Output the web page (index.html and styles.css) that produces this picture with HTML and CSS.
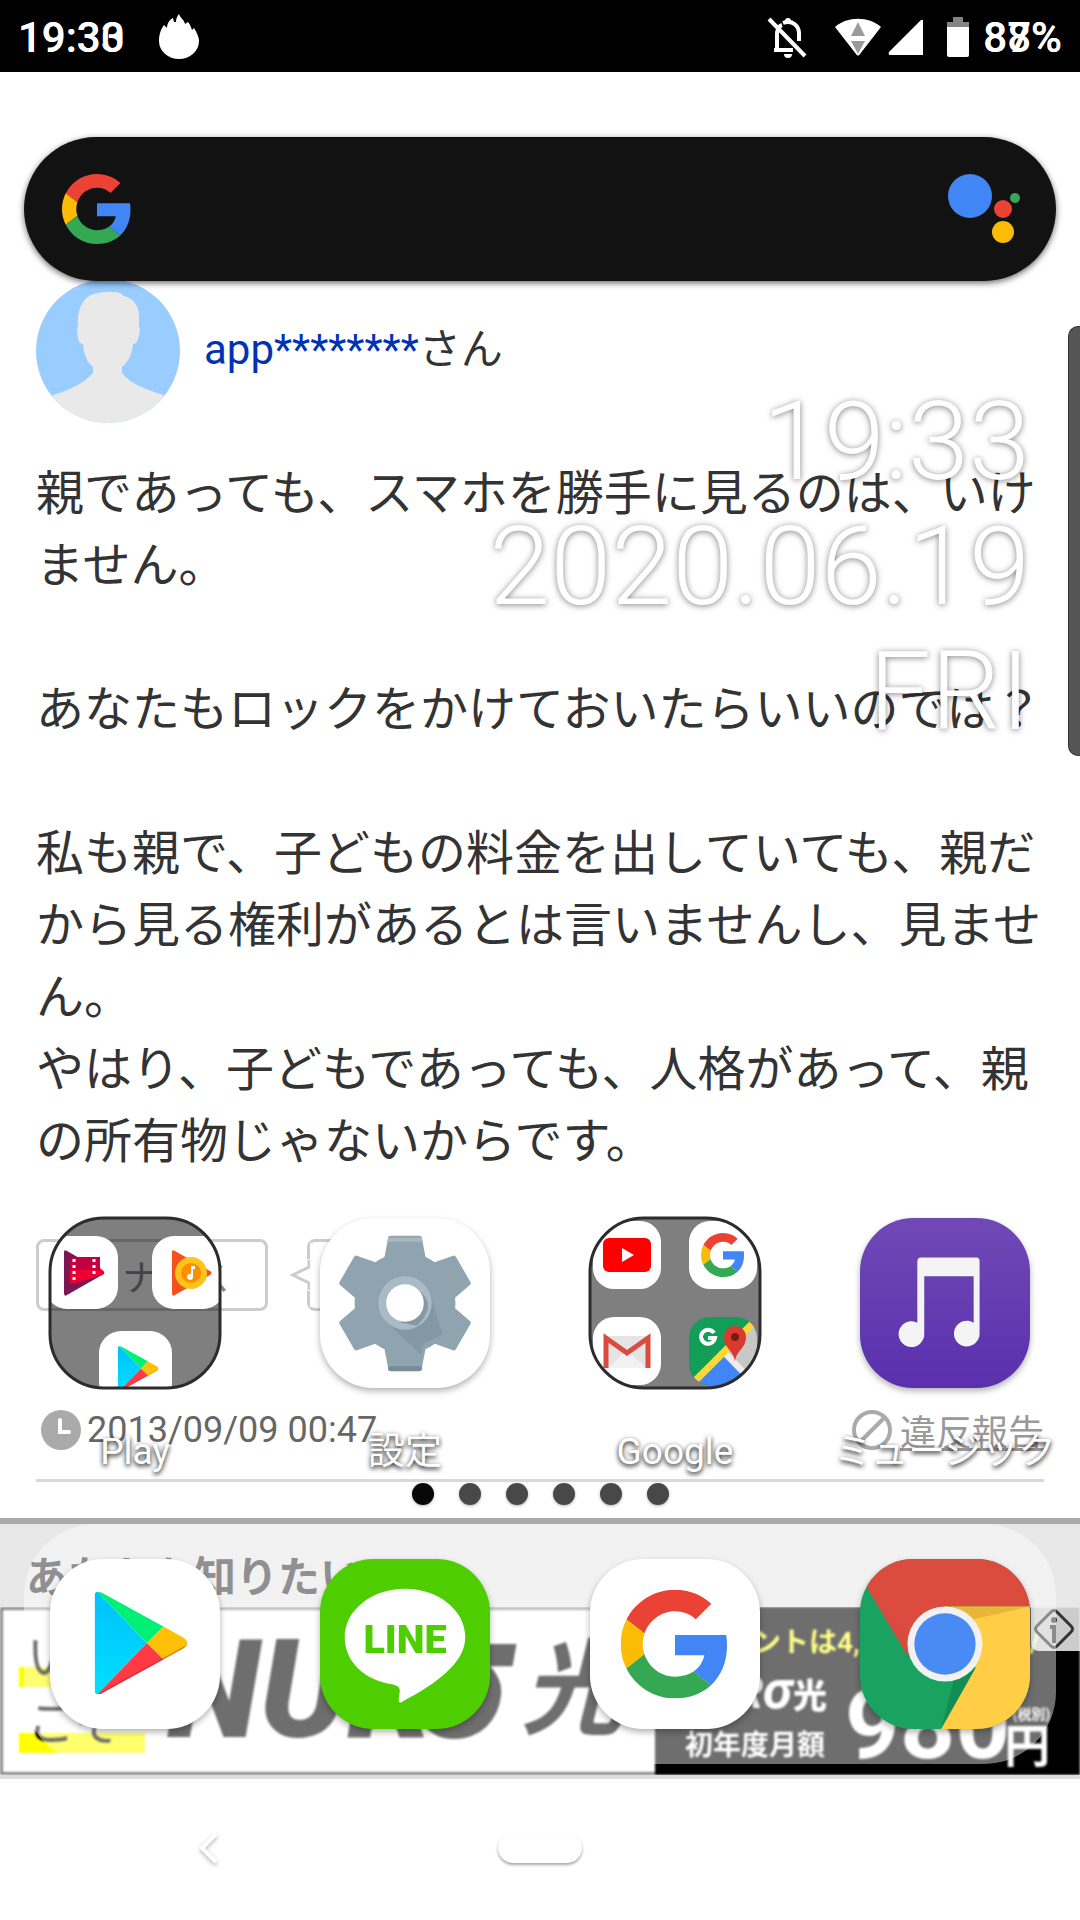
FILE: index.html
```
<!DOCTYPE html>
<html lang="ja">

<head>
    <meta charset="UTF-8">
    <meta name="viewport" content="width=device-width, initial-scale=1.0">
    <title>ホーム</title>
    <link rel="stylesheet" href="styles.css">
</head>

<body>
    <!-- shared logos -->
    <svg class="defs" width="0" height="0" aria-hidden="true">
        <defs>
            <symbol id="google-g" viewBox="0 0 48 48">
                <path fill="#ea4335" d="M24 9.5c3.54 0 6.71 1.22 9.21 3.6l6.85-6.85C35.9 2.38 30.47 0 24 0 14.62 0 6.51 5.38 2.56 13.22l7.98 6.19C12.43 13.72 17.74 9.5 24 9.5z"/>
                <path fill="#4285f4" d="M46.98 24.55c0-1.57-.15-3.09-.38-4.55H24v9.02h12.94c-.58 2.96-2.26 5.48-4.78 7.18l7.73 6c4.51-4.18 7.09-10.36 7.09-17.65z"/>
                <path fill="#fbbc05" d="M10.53 28.59c-.48-1.45-.76-2.99-.76-4.59s.27-3.14.76-4.59l-7.98-6.19C.92 16.46 0 20.12 0 24c0 3.88.92 7.54 2.56 10.78l7.97-6.19z"/>
                <path fill="#34a853" d="M24 48c6.48 0 11.93-2.13 15.89-5.81l-7.73-6c-2.15 1.45-4.92 2.3-8.16 2.3-6.26 0-11.57-4.22-13.47-9.91l-7.98 6.19C6.51 42.62 14.62 48 24 48z"/>
            </symbol>
            <linearGradient id="playBlue" x1="0" y1="0" x2="0" y2="1">
                <stop offset="0" stop-color="#00bfff"/>
                <stop offset="1" stop-color="#00e1ff"/>
            </linearGradient>
            <linearGradient id="musicBg" x1="0" y1="0" x2="0" y2="1">
                <stop offset="0" stop-color="#7049b6"/>
                <stop offset="1" stop-color="#5a30ad"/>
            </linearGradient>
            <linearGradient id="redShade" x1="0" y1="1" x2="1" y2="0">
                <stop offset="0" stop-color="#a8332a"/>
                <stop offset=".6" stop-color="#db4c3f" stop-opacity="0"/>
            </linearGradient>
            <clipPath id="playClip">
                <path d="M45 38Q45 31 52 34L134 79Q144 85 134 91L52 136Q45 139 45 132z"/>
            </clipPath>
            <symbol id="play" viewBox="45 33 95 104">
                <g clip-path="url(#playClip)">
                    <path fill="url(#playBlue)" d="M45 30L98 85 45 140z"/>
                    <path fill="#00f076" d="M45 30L120 63 98 85z"/>
                    <path fill="#ffc107" d="M98 85L116 67 150 85 116 103z"/>
                    <path fill="#ff3a44" d="M45 140L98 85 120 107z"/>
                    <path fill="none" stroke="#8a1030" stroke-opacity=".35" stroke-width="4" d="M50 138L144 86"/>
                </g>
            </symbol>
            <clipPath id="tileClip"><rect width="172" height="172" rx="54"/></clipPath>
            <clipPath id="folderClip"><rect x="2" y="2" width="170" height="170" rx="54"/></clipPath>
        </defs>
    </svg>

    <div class="phone">
        <header class="status">
            <div class="status-time">
                <span>19:30</span>
                <span class="ghost">19:33</span>
            </div>
            <svg class="flame" width="40" height="46" viewBox="0 0 40 46" fill="#fff">
                <path d="M20 0c1 4 5 5 6 10l3-2c2 2 3 5 4 8l2-2c3 5 5 9 5 13a20 18 0 0 1-40 0C0 20 2 15 5 11l3 3c0-4 2-8 6-10l1 4h2c0-3 1-6 3-8z"/>
            </svg>
            <div class="status-icons">
                <svg class="bell" width="40" height="42" viewBox="0 0 40 42" fill="none" stroke="#fff" stroke-width="4">
                    <path d="M7 34H26M10 34V18C10 14 12 10 15 9M16 7C26 3 32 11 32 17V25"/>
                    <path d="M2 3L38 40" stroke-width="4"/>
                    <circle cx="21" cy="5" r="3" fill="#fff" stroke="none"/>
                    <path d="M17 38h8a4 4 0 0 1-8 0z" fill="#fff" stroke="none"/>
                </svg>
                <svg width="46" height="38" viewBox="0 0 46 38">
                    <path fill="#fff" d="M0 9C12-2 34-2 46 9L25 36Q23 39 21 36z"/>
                    <path fill="#9a9a9a" d="M23 4l7 14H16zM16 23h14l-7 13z"/>
                </svg>
                <svg class="signal" width="35" height="36" viewBox="0 0 35 36">
                    <path fill="#fff" d="M33 1Q35 0 35 2V36H2Q0 36 1 33z"/>
                </svg>
                <svg width="22" height="40" viewBox="0 0 22 40">
                    <path fill="#848484" d="M6 0h10v5h6v5H0V5h6z"/>
                    <path fill="#fff" d="M0 10h22v28q0 2-2 2H2q-2 0-2-2z"/>
                </svg>
            </div>
            <div class="status-battery">
                <span>88%</span>
                <span class="ghost">87%</span>
            </div>
        </header>

        <!-- browser page under the launcher -->
        <main class="article">
            <div class="author">
                <svg class="avatar" width="144" height="144" viewBox="0 0 144 144">
                    <clipPath id="face"><circle cx="72" cy="72" r="72"/></clipPath>
                    <g clip-path="url(#face)">
                        <rect width="144" height="144" fill="#99ccff"/>
                        <path fill="#e9e9e9" d="M58 15Q72 11 84 14L88 17C99 20 103 28 103 38V46Q105 52 102 60 101 65 97 65C96 76 92 83 86 88V94C96 106 110 110 127 116L144 144H0L17 116C36 110 48 104 57 94V88C51 83 48 76 47 65 41 65 42 56 41 50L42 46C41 30 47 18 58 15z"/>
                    </g>
                </svg>
                <p class="author-name"><a href="#">app********</a>さん</p>
            </div>
            <p class="answer">親であっても、スマホを勝手に見るのは、いけません。<br><br>あなたもロックをかけておいたらいいのでは？<br><br>私も親で、子どもの料金を出していても、親だから見る権利があるとは言いませんし、見ません。<br>やはり、子どもであっても、人格があって、親の所有物じゃないからです。</p>
            <div class="votes">
                <button class="nice">ナイス</button>
                <svg class="vote-arrow" width="20" height="34" viewBox="0 0 20 34">
                    <path d="M19 2V9L3 17 19 25V32" fill="#fff" stroke="#ccc" stroke-width="3"/>
                </svg>
                <div class="count"></div>
            </div>
            <div class="meta">
                <svg width="40" height="40" viewBox="0 0 40 40">
                    <circle cx="20" cy="20" r="20" fill="#aaa"/>
                    <path d="M19 10V22H28" fill="none" stroke="#fff" stroke-width="4" stroke-linecap="round"/>
                </svg>
                <time>2013/09/09 00:47</time>
                <a class="report" href="#">
                    <svg width="40" height="40" viewBox="0 0 40 40" fill="none" stroke="#aaa" stroke-width="4">
                        <circle cx="20" cy="20" r="18"/>
                        <path d="M32 8L8 32"/>
                    </svg>
                    <span>違反報告</span>
                </a>
            </div>
        </main>
        <h2 class="related">あなたも知りたい？</h2>
        <div class="ad">
            <div class="ad-inner">
                <div class="ad-left">
                    <div class="catch"><span>いま</span><span>こそ</span></div>
                    <div class="ad-logo">NUR<i>σ</i></div>
                    <div class="ad-light">光</div>
                </div>
                <div class="ad-right">
                    <div class="ad-point"><span>ポイントは4,743円</span><span>/</span></div>
                    <div class="ad-price">
                        <div class="ad-plan">
                            <div class="ad-small-logo">NUR<i>σ</i><b>光</b></div>
                            <div>初年度月額</div>
                        </div>
                        <div class="ad-amount">980</div>
                        <div class="ad-yen"><small>(税別)</small>円</div>
                    </div>
                </div>
            </div>
            <a class="ad-info" href="#" aria-label="広告情報">
                <svg width="40" height="40" viewBox="0 0 40 40" fill="none" stroke="#333" stroke-width="3">
                    <path d="M17 3Q20 0 23 3L37 17Q40 20 37 23L23 37Q20 40 17 37L3 23Q0 20 3 17z"/>
                    <path d="M16 18h4v16" stroke-width="4"/>
                    <circle cx="20" cy="11" r="3" fill="#333" stroke="none"/>
                </svg>
            </a>
        </div>
        <div class="scrollbar"></div>

        <!-- launcher -->
        <div class="launcher">
            <form class="search">
                <svg width="70" height="70"><use href="#google-g"/></svg>
                <input type="text" aria-label="検索">
                <button type="button" aria-label="アシスタント">
                    <svg width="74" height="70" viewBox="0 0 74 70">
                        <circle cx="22" cy="22" r="22" fill="#4285f4"/>
                        <circle cx="67" cy="24" r="5" fill="#34a853"/>
                        <circle cx="55" cy="35" r="9" fill="#ea4335"/>
                        <circle cx="55" cy="58" r="11" fill="#fbbc05"/>
                    </svg>
                </button>
            </form>

            <div class="clock">
                <div>19:33</div>
                <div>2020.06.19</div>
                <div>FRI</div>
            </div>

            <nav class="apps">
                <button class="app">
                    <svg width="174" height="174" viewBox="0 0 174 174">
                        <rect x="1" y="1" width="172" height="172" rx="55" fill="#000" fill-opacity=".5"/>
                        <g clip-path="url(#folderClip)">
                            <rect x="-3" y="20" width="73" height="73" rx="22" fill="#fff"/>
                            <path fill="#7b1750" d="M16 36Q16 33 19 35L54 55Q57 57 54 59L19 79Q16 81 16 77z"/>
                            <path fill="#c2003f" d="M22 41h30v11l4 4q1 2-2 3L22 68z"/>
                            <path fill="#f00032" d="M22 54h32q4 2 0 5L28 67h-6z"/>
                            <path stroke="#fff" stroke-width="3" stroke-dasharray="3 3" d="M26 43V67M46 43V60"/>
                            <rect x="104" y="20" width="73" height="73" rx="22" fill="#fff"/>
                            <path fill="#f4511e" d="M124 36Q124 33 127 35L162 55Q165 57 162 59L127 79Q124 81 124 77z"/>
                            <circle cx="143" cy="57" r="16" fill="#ffc31a"/>
                            <circle cx="143" cy="57" r="10" fill="#ff8f00"/>
                            <path fill="#fff" d="M143 50h4v3h-2v8a3 3 0 1 1-2-3z"/>
                            <rect x="51" y="115" width="73" height="73" rx="22" fill="#fff"/>
                            <use href="#play" x="70" y="130" width="41" height="45"/>
                        </g>
                        <rect x="2" y="2" width="170" height="170" rx="54" fill="none" stroke="#2c2c2c" stroke-width="3"/>
                    </svg>
                    <span>Play</span>
                </button>
                <button class="app">
                    <svg class="tile" width="170" height="174" viewBox="0 -1 172 174">
                        <rect width="172" height="172" rx="54" fill="#fff"/>
                        <g fill="#8fa4ae">
                            <circle cx="86" cy="86" r="51"/>
                            <path id="tooth" d="M64 46L69 20Q69 18 72 18H100Q103 18 103 20L108 46z"/>
                            <use href="#tooth" transform="rotate(60 86 86)"/>
                            <use href="#tooth" transform="rotate(120 86 86)"/>
                            <use href="#tooth" transform="rotate(180 86 86)"/>
                            <use href="#tooth" transform="rotate(240 86 86)"/>
                            <use href="#tooth" transform="rotate(300 86 86)"/>
                        </g>
                        <path fill="#a7b8c0" d="M69 20h34l1 4H68z"/>
                        <path fill="#768b95" d="M69 150h34v3q0 2-3 2H72q-3 0-3-2z"/>
                        <path fill="#7b919c" fill-opacity=".6" d="M67 105L102 138 105 127 124 118 112 78z"/>
                        <circle cx="86" cy="86" r="27" fill="#a9bbc4"/>
                        <path fill="#8699a2" d="M99 72Q120 88 98 109L82 106z"/>
                        <circle cx="86" cy="86" r="19" fill="#fff"/>
                    </svg>
                    <span>設定</span>
                </button>
                <button class="app">
                    <svg width="174" height="174" viewBox="0 0 174 174">
                        <rect x="1" y="1" width="172" height="172" rx="55" fill="#000" fill-opacity=".5"/>
                        <g clip-path="url(#folderClip)">
                            <rect x="5" y="5" width="68" height="68" rx="21" fill="#fff"/>
                            <rect x="15" y="22" width="48" height="34" rx="6" fill="#f00"/>
                            <path fill="#fff" d="M34 32L46 39 34 46z"/>
                            <rect x="101" y="5" width="68" height="68" rx="21" fill="#fff"/>
                            <use href="#google-g" x="113" y="17" width="44" height="44"/>
                            <rect x="5" y="101" width="68" height="68" rx="21" fill="#fff"/>
                            <path fill="#e4e4e4" d="M16 120h46v32H16z"/>
                            <path fill="#f2f2f2" d="M20 152L39 134 58 152z"/>
                            <path fill="none" stroke="#d94a3f" stroke-width="5" d="M18 152V122L39 137 60 122V152"/>
                            <clipPath id="mapClip"><rect x="101" y="101" width="68" height="68" rx="21"/></clipPath>
                            <g clip-path="url(#mapClip)">
                                <rect x="101" y="101" width="68" height="68" fill="#129d58"/>
                                <path fill="#c8c8c8" d="M169 101V169H150L130 143z"/>
                                <path fill="#4285f4" d="M135 140L163 169H105z"/>
                                <path stroke="#eee" stroke-width="6" d="M137 137L170 171"/>
                                <path stroke="#fdd835" stroke-width="7" d="M100 172L170 102"/>
                                <path fill="none" stroke="#fff" stroke-width="4" d="M126 117A7 7 0 1 0 127 122H120"/>
                                <path fill="#d93a30" d="M147 147C147 135 136 133 136 121A11 11 0 0 1 158 121C158 133 147 135 147 147z"/>
                                <circle cx="147" cy="121" r="4" fill="#7c1a14"/>
                            </g>
                        </g>
                        <rect x="2" y="2" width="170" height="170" rx="54" fill="none" stroke="#2c2c2c" stroke-width="3"/>
                    </svg>
                    <span>Google</span>
                </button>
                <button class="app">
                    <svg class="tile" width="170" height="174" viewBox="0 -1 172 174">
                        <rect width="172" height="172" rx="54" fill="url(#musicBg)"/>
                        <path fill="#f4f4f4" d="M58 44Q58 40 62 40H118Q121 40 121 44V117A13 13 0 1 1 115 106V59H65V117A13 13 0 1 1 58 106z"/>
                    </svg>
                    <span>ミュージック</span>
                </button>
            </nav>

            <div class="dots">
                <i class="on"></i><i></i><i></i><i></i><i></i><i></i>
            </div>

            <nav class="dock">
                <button aria-label="Play ストア">
                    <svg class="tile" width="170" height="170" viewBox="0 0 172 172">
                        <rect width="172" height="172" rx="54" fill="#fff"/>
                        <use href="#play" x="45" y="33" width="95" height="104"/>
                    </svg>
                </button>
                <button aria-label="LINE">
                    <svg class="tile" width="170" height="170" viewBox="0 0 172 172">
                        <rect width="172" height="172" rx="54" fill="#4ecd00"/>
                        <path fill="#fff" d="M86 30C120 30 147 52 147 79 147 105 118 126 84 144 80 147 79 144 80 139 82 130 80 129 74 127 45 123 25 104 25 79 25 52 52 30 86 30z"/>
                        <text class="line-text" x="86" y="95" text-anchor="middle">LINE</text>
                    </svg>
                </button>
                <button aria-label="Google">
                    <svg class="tile" width="170" height="170" viewBox="0 0 172 172">
                        <rect width="172" height="172" rx="54" fill="#fff"/>
                        <use href="#google-g" x="31" y="31" width="110" height="110"/>
                    </svg>
                </button>
                <button aria-label="Chrome">
                    <svg class="tile" width="170" height="170" viewBox="0 0 172 172">
                        <g clip-path="url(#tileClip)">
                            <rect width="172" height="172" fill="#1aa260"/>
                            <path fill="#db4c3f" d="M-10 0H172V48H86L48 98z"/>
                            <path fill="url(#redShade)" fill-opacity=".5" d="M7 28L48 98 62 60 70 30z"/>
                            <path fill="#ffcd46" d="M86 48H172V172H82L117 110z"/>
                            <path fill="#d9a52e" fill-opacity=".6" d="M86 48H172L110 62z"/>
                            <path fill="#0b7a45" fill-opacity=".5" d="M117 110L82 172 95 122z"/>
                            <circle cx="86" cy="86" r="38" fill="#f1f1f1"/>
                            <circle cx="86" cy="86" r="31" fill="#4a8af4"/>
                        </g>
                    </svg>
                </button>
            </nav>

            <nav class="softkeys">
                <button aria-label="戻る">
                    <svg class="back" width="20" height="32" viewBox="0 0 20 32">
                        <path d="M17 3L4 16 17 29" fill="none" stroke="#fff" stroke-width="4" stroke-linecap="round"/>
                    </svg>
                </button>
                <button class="home" aria-label="ホーム"></button>
                <span></span>
            </nav>
        </div>
    </div>
</body>

</html>
```
FILE: styles.css
```
* {
    box-sizing: border-box;
}

body {
    margin: 0;
    background: #fff;
    color: #333;
    font-family: Roboto, "Noto Sans CJK JP", sans-serif;
}

p,
h2 {
    margin: 0;
}

button {
    padding: 0;
    border: none;
    background: none;
    color: inherit;
    font: inherit;
}

svg {
    display: block;
    flex-shrink: 0;
}

.defs {
    position: absolute;
}

.phone {
    position: relative;
    min-height: 100vh;
    overflow: hidden;
}

/* status bar */
.status {
    display: flex;
    align-items: center;
    height: 72px;
    padding: 2px 18px 0;
    background: #000;
    color: #fff;
    font-size: 42px;
    font-weight: 500;
}

.status-time,
.status-battery {
    position: relative;
}

.ghost {
    position: absolute;
    top: 0;
    left: 0;
}

.flame {
    margin-left: 34px;
}

.status-icons {
    display: flex;
    align-items: center;
    margin-left: auto;
    margin-right: 14px;
}

.bell {
    margin-right: 28px;
}

.signal {
    margin: 0 24px 0 7px;
}

/* article */
.article {
    margin: 207px 36px 0;
    border-bottom: 3px solid #d8d8d8;
}

.author {
    display: flex;
    align-items: center;
    gap: 24px;
    font-size: 42px;
}

.author-name {
    padding-bottom: 12px;
}

.author-name a {
    color: #0033b4;
    text-decoration: none;
}

.answer {
    margin-top: 35px;
    font-size: 48px;
    line-height: 72px;
}

.votes {
    display: flex;
    align-items: center;
    margin-top: 61px;
}

.nice {
    width: 232px;
    height: 72px;
    padding-left: 48px;
    border: 3px solid #ccc;
    border-radius: 8px;
    background: #fff;
    color: #888;
    font-size: 36px;
    text-align: center;
}

.vote-arrow {
    position: relative;
    margin: 0 -3px 0 22px;
}

.count {
    width: 120px;
    height: 72px;
    border: 3px solid #ccc;
    border-left-color: transparent;
    border-radius: 8px;
    background: linear-gradient(#ccc, #ccc) 0 0 / 3px 20px no-repeat, linear-gradient(#ccc, #ccc) 0 100% / 3px 20px no-repeat;
    background-origin: border-box;
}

.meta {
    display: flex;
    align-items: center;
    gap: 6px;
    height: 62px;
    margin-top: 88px;
    margin-bottom: 18px;
    padding-left: 5px;
    color: #666;
    font-size: 36px;
}

.report {
    display: flex;
    align-items: center;
    gap: 8px;
    margin-left: auto;
    color: #999;
}

.related {
    height: 89px;
    margin-top: 36px;
    padding-left: 26px;
    border-top: 6px solid #aaa;
    background: #e8e8e8;
    color: #3c3c3c;
    font-size: 42px;
    line-height: 108px;
}

/* banner */
.ad {
    position: relative;
    height: 172px;
    border-bottom: 4px solid #ddd;
    overflow: hidden;
}

.ad-inner {
    display: grid;
    grid-template-columns: minmax(0, 655fr) minmax(0, 425fr);
    height: 168px;
    background: #000;
    filter: blur(1px);
}

.ad-left {
    display: flex;
    align-items: center;
    padding-left: 16px;
    border: 3px solid #888;
    border-right: none;
    background: #fff;
    color: #000;
    white-space: nowrap;
}

.catch {
    display: grid;
    width: 148px;
    font-size: 48px;
    line-height: 66px;
}

.catch span {
    width: 126px;
    padding-left: 8px;
    background: linear-gradient(#ff0, #ff0) 0 42px / 126px 20px no-repeat;
}

.ad-logo {
    width: 354px;
    font-size: 136px;
    font-style: italic;
    font-weight: 900;
    line-height: 160px;
}

.ad-logo i {
    margin-left: -20px;
    font-size: 176px;
    line-height: 0;
}

.ad-light {
    font-size: 104px;
    font-style: italic;
    font-weight: 700;
    line-height: 144px;
}

.ad-right {
    padding: 14px 30px 0;
    color: #fff;
    font-weight: 700;
    white-space: nowrap;
}

.ad-point {
    display: flex;
    justify-content: space-between;
    padding: 0 10px 0 12px;
    color: #ffff30;
    font-size: 28px;
    line-height: 44px;
}

.ad-price {
    display: flex;
    align-items: flex-end;
    gap: 18px;
}

.ad-plan {
    width: 142px;
    font-size: 28px;
    line-height: 50px;
}

.ad-small-logo {
    display: flex;
    align-items: baseline;
    justify-content: flex-end;
    font-size: 44px;
    font-style: italic;
}

.ad-small-logo i {
    font-size: 54px;
}

.ad-small-logo b {
    font-size: 34px;
    font-style: normal;
}

.ad-amount {
    font-size: 96px;
    line-height: 92px;
}

.ad-yen {
    display: grid;
    justify-items: end;
    margin-left: -24px;
    font-size: 46px;
    line-height: 50px;
}

.ad-yen small {
    font-size: 14px;
    line-height: 14px;
}

.ad-info {
    position: absolute;
    top: 0;
    right: 0;
    padding: 2px 6px 2px 3px;
    border-bottom-left-radius: 8px;
    background: rgba(255, 255, 255, 0.8);
}

.scrollbar {
    position: absolute;
    top: 326px;
    right: 0;
    width: 12px;
    height: 430px;
    border: 1px solid #333;
    border-right: none;
    border-radius: 10px 0 0 10px;
    background: #555;
}

/* launcher layer */
.launcher {
    position: absolute;
    top: 72px;
    left: 0;
    right: 0;
}

.search {
    display: flex;
    align-items: center;
    height: 144px;
    margin: 65px 24px 0;
    padding: 0 34px 0 38px;
    border-radius: 72px;
    background: #121212;
    box-shadow: 0 2px 6px rgba(0, 0, 0, 0.6);
}

.search input {
    flex: 1;
    min-width: 0;
    height: 100%;
    border: none;
    background: none;
    color: #fff;
    font-size: 42px;
}

.clock {
    margin-top: 98px;
    padding-right: 50px;
    color: #fff;
    font-size: 110px;
    font-weight: 300;
    line-height: 125px;
    text-align: right;
    text-shadow: 0 1px 6px rgba(0, 0, 0, 0.5);
}

.apps {
    display: grid;
    grid-template-columns: repeat(4, 1fr);
    margin-top: 462px;
}

.app {
    display: flex;
    flex-direction: column;
    align-items: center;
    gap: 40px;
    color: #fff;
    font-size: 37px;
    line-height: 44px;
    text-shadow: 0 2px 5px #000;
    white-space: nowrap;
}

.tile {
    filter: drop-shadow(0 3px 3px rgba(0, 0, 0, 0.3));
}

.dots {
    display: flex;
    justify-content: center;
    gap: 25px;
    margin-top: 9px;
}

.dots i {
    width: 22px;
    height: 22px;
    border-radius: 50%;
    background: #484848;
    box-shadow: 0 1px 3px rgba(0, 0, 0, 0.3);
}

.dots .on {
    background: #080808;
}

.dock {
    display: flex;
    align-items: center;
    justify-content: space-between;
    height: 240px;
    margin: 19px 24px 0;
    padding: 0 26px;
    border-radius: 72px;
    background: rgba(255, 255, 255, 0.43);
}

.line-text {
    fill: #4ecd00;
    font-size: 40px;
    font-weight: 900;
}

.softkeys {
    display: grid;
    grid-template-columns: 5fr 3fr 5fr;
    align-items: center;
    justify-items: center;
    height: 140px;
    margin-top: 14px;
}

.back {
    filter: drop-shadow(0 2px 2px rgba(0, 0, 0, 0.3));
}

.home {
    width: 84px;
    height: 30px;
    border-radius: 15px;
    background: #fff;
    box-shadow: 0 2px 3px rgba(0, 0, 0, 0.35);
}
```
